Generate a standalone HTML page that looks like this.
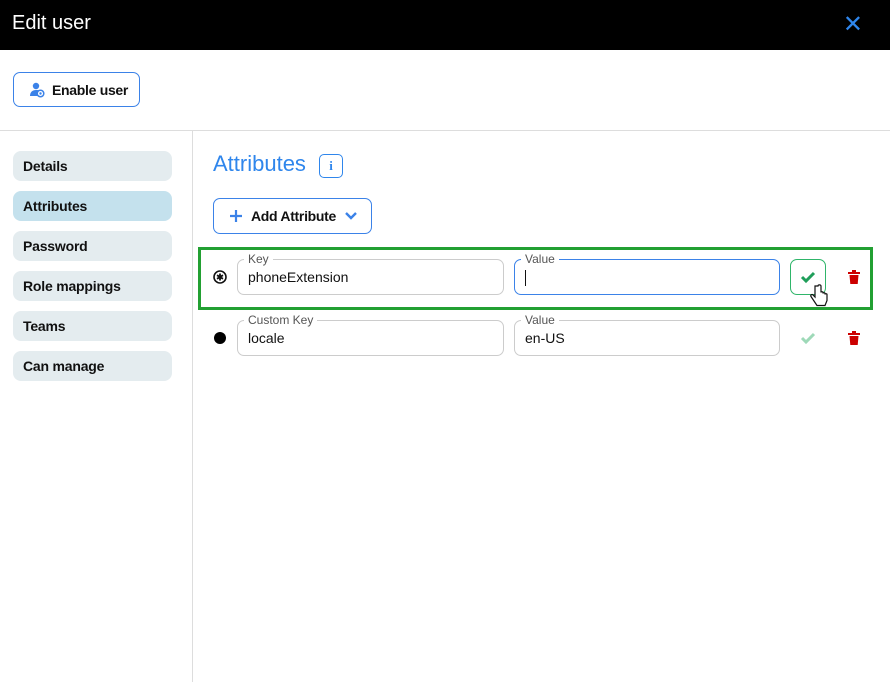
<!DOCTYPE html>
<html><head><style>
*{box-sizing:border-box;margin:0;padding:0}
body{width:890px;height:682px;background:#fff;font-family:"Liberation Sans",sans-serif;position:relative;overflow:hidden;color:#111}
.hdr{position:absolute;left:0;top:0;width:890px;height:50px;background:#000;color:#fff;font-size:20px;padding:12px 12px}
.x{position:absolute;right:27px;top:10px;color:#2f86ec;font-size:24px}
.btn{position:absolute;border:1px solid #3b82e8;border-radius:7px;background:#fff;font-weight:bold;font-size:14px;display:flex;align-items:center;letter-spacing:-0.3px}
.hline{position:absolute;left:0;top:130px;width:890px;height:1px;background:#ddd}
.vline{position:absolute;left:192px;top:131px;width:1px;height:551px;background:#ddd}
.nav{position:absolute;left:13px;width:159px;height:30px;border-radius:8px;background:#e4ecef;font-weight:bold;font-size:14px;padding:7px 10px;letter-spacing:-0.2px}
.title{position:absolute;left:213px;top:151px;font-size:22px;color:#2f86ec}
.info{position:absolute;left:319px;top:154px;width:24px;height:24px;border:1px solid #2f86ec;border-radius:5px;color:#2f86ec;font-weight:bold;font-size:13px;text-align:center;line-height:22px;font-family:"Liberation Serif",serif}
.inp{position:absolute;height:36px;border:1px solid #ccc;border-radius:7px;font-size:14px;padding:9px 10px}
.lbl{position:absolute;top:-8px;left:6px;background:#fff;padding:0 4px;font-size:12px;color:#555;line-height:14px}
.green{position:absolute;left:198px;top:247px;width:675px;height:63px;border:3px solid #22a032}
</style></head><body>
<div class="hdr">Edit user</div>
<div class="x">✕</div>
<div class="btn" style="left:13px;top:72px;width:127px;height:35px;padding-left:15px">
<svg width="16" height="16" viewBox="0 0 16 16" style="margin-right:7px"><circle cx="7" cy="4" r="3.2" fill="#3b82e8"/><path d="M1 14c0-4 2.5-6 6-6s4 1 4 1v5z" fill="#3b82e8"/><circle cx="11.5" cy="11.5" r="3.3" fill="#fff" stroke="#3b82e8" stroke-width="1.5"/><circle cx="11.5" cy="11.5" r="1.2" fill="#3b82e8"/></svg>Enable user</div>
<div class="hline"></div><div class="vline"></div>
<div class="nav" style="top:151px">Details</div>
<div class="nav" style="top:191px;background:#c4e1ed">Attributes</div>
<div class="nav" style="top:231px">Password</div>
<div class="nav" style="top:271px">Role mappings</div>
<div class="nav" style="top:311px">Teams</div>
<div class="nav" style="top:351px">Can manage</div>
<div class="title">Attributes</div>
<div class="info">i</div>
<div class="btn" style="left:213px;top:198px;width:159px;height:36px;padding-left:15px">
<svg width="14" height="14" viewBox="0 0 14 14" style="margin-right:8px"><path d="M7 1v12M1 7h12" stroke="#3b82e8" stroke-width="2.2"/></svg>Add Attribute
<svg width="14" height="10" viewBox="0 0 14 10" style="margin-left:8px"><path d="M2 2l5 5 5-5" stroke="#3b82e8" stroke-width="2.4" fill="none"/></svg></div>
<div class="green"></div>
<svg style="position:absolute;left:213px;top:270px" width="14" height="14" viewBox="0 0 14 14"><circle cx="7" cy="7" r="6" fill="none" stroke="#111" stroke-width="1.6"/><path d="M7 3.5v7M4 5.2l6 3.6M10 5.2l-6 3.6" stroke="#111" stroke-width="1.8"/></svg>
<div class="inp" style="left:237px;top:259px;width:267px"><span class="lbl">Key</span>phoneExtension</div>
<div class="inp" style="left:514px;top:259px;width:266px;border-color:#3b82e8"><span class="lbl">Value</span><span style="border-left:1px solid #111;display:inline-block;height:16px;vertical-align:middle"></span></div>
<div style="position:absolute;left:790px;top:259px;width:36px;height:36px;border:1px solid #2fb56a;border-radius:7px"></div>
<svg style="position:absolute;left:800px;top:270px" width="16" height="14" viewBox="0 0 16 14"><path d="M2 7l4 4 8-8" stroke="#1f9e5a" stroke-width="3" fill="none"/></svg>
<svg style="position:absolute;left:848px;top:270px" width="12" height="14" viewBox="0 0 12 14"><rect x="0" y="2" width="12" height="2" fill="#c00"/><rect x="4" y="0" width="4" height="2" fill="#c00"/><path d="M1.5 5h9l-.8 9h-7.4z" fill="#c00"/></svg>
<svg style="position:absolute;left:810px;top:284px" width="20" height="24" viewBox="0 0 20 24"><path d="M5 2v11l-2-2c-1-1-3 0-2 1.5l4 6 2 3h8l2-5v-6c0-1-2-1-2 0v-1c0-1-2-1-2 0v-1c0-1-2-1-2 0V2c0-1.5-3-1.5-3 0z" fill="#fff" stroke="#111" stroke-width="1.2"/></svg>
<div style="position:absolute;left:214px;top:332px;width:12px;height:12px;border-radius:50%;background:#000"></div>
<div class="inp" style="left:237px;top:320px;width:267px"><span class="lbl">Custom Key</span>locale</div>
<div class="inp" style="left:514px;top:320px;width:266px"><span class="lbl">Value</span>en-US</div>
<svg style="position:absolute;left:800px;top:331px" width="16" height="14" viewBox="0 0 16 14"><path d="M2 7l4 4 8-8" stroke="#9ed9b8" stroke-width="3" fill="none"/></svg>
<svg style="position:absolute;left:848px;top:331px" width="12" height="14" viewBox="0 0 12 14"><rect x="0" y="2" width="12" height="2" fill="#c00"/><rect x="4" y="0" width="4" height="2" fill="#c00"/><path d="M1.5 5h9l-.8 9h-7.4z" fill="#c00"/></svg>
</body></html>
